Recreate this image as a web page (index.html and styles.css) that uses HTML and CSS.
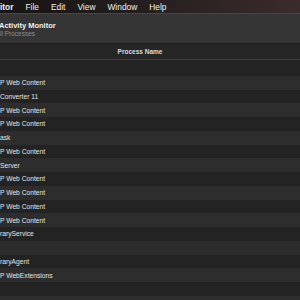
FILE: index.html
```html
<!DOCTYPE html>
<html lang="en">
<head>
  <meta charset="UTF-8">
  <meta name="viewport" content="width=device-width, initial-scale=1.0">
  <title>Activity Monitor</title>
  <link rel="stylesheet" href="styles.css">
</head>
<body>
  <!-- Barra de menu del sistema -->
  <div class="menubar">
    <span class="menu-app">itor</span>
    <span>File</span>
    <span>Edit</span>
    <span>View</span>
    <span>Window</span>
    <span>Help</span>
  </div>

  <div class="window">
    <div class="titlebar">
      <div class="title">Activity Monitor</div>
      <div class="subtitle">ll Processes</div>
    </div>

    <div class="table-head">
      <div class="col-name">Process Name</div>
    </div>

    <!-- Listado de procesos -->
    <div class="rows">
      <div class="row"></div>
      <div class="row">P Web Content</div>
      <div class="row">Converter 11</div>
      <div class="row">P Web Content</div>
      <div class="row">P Web Content</div>
      <div class="row">ask</div>
      <div class="row">P Web Content</div>
      <div class="row">Server</div>
      <div class="row">P Web Content</div>
      <div class="row">P Web Content</div>
      <div class="row">P Web Content</div>
      <div class="row">P Web Content</div>
      <div class="row">raryService</div>
      <div class="row"></div>
      <div class="row">raryAgent</div>
      <div class="row">P WebExtensions</div>
      <div class="row"></div>
      <div class="row"></div>
    </div>
  </div>
</body>
</html>
```

FILE: styles.css
```css
/* Base */
body {
  margin: 0;
  width: 300px;
  height: 300px;
  overflow: hidden;
  background: #232323;
  font-family: "Liberation Sans", Arial, sans-serif;
  color: #e6e6e6;
}
/* Barra de menu */
.menubar {
  height: 13px;
  display: flex;
  align-items: center;
  gap: 12px;
  background: linear-gradient(to right, #161414, #241e1e 45%, #3a2c2a);
  font-size: 8.4px;
  font-weight: 500;
  color: #f2f2f2;
  white-space: nowrap;
}
.menu-app {
  font-weight: bold;
}
/* Ventana */
.titlebar {
  box-sizing: border-box;
  height: 31px;
  padding-top: 7px;
  background: #353535;
  border-top: 1px solid #474747;
  border-bottom: 1px solid #1c1c1c;
}
.title {
  margin-left: -1px;
  font-size: 7.5px;
  font-weight: bold;
  color: #f0f0f0;
  line-height: 9px;
}
.subtitle {
  font-size: 6.5px;
  color: #8c8c8c;
  line-height: 8px;
}
.table-head {
  height: 15px;
  display: flex;
  align-items: center;
  background: #262626;
  border-bottom: 1px solid #3a3a3a;
}
.col-name {
  width: 280px;
  text-align: center;
  font-size: 6.5px;
  font-weight: bold;
  color: #dcdcdc;
}
.rows {
  padding-top: 2px;
}
.row {
  height: 13.75px;
  display: flex;
  align-items: center;
  font-size: 6.7px;
  color: #e4e4e4;
  white-space: nowrap;
  background: #232323;
}
.row:nth-child(even) {
  background: #2d2d2d;
}
```
